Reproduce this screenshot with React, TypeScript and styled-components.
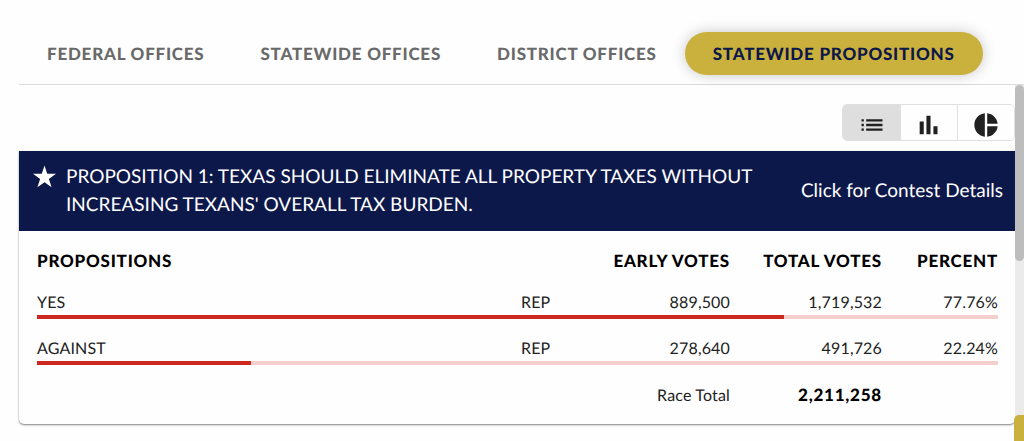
import React, { useState } from "react";
import styled, { createGlobalStyle } from "styled-components";

const GlobalStyle = createGlobalStyle`
  *, *::before, *::after { box-sizing: border-box; }
  html, body, #root { height: 100%; }
  body {
    margin: 0;
    background: #fefefe;
    color: #212121;
    font-family: Lato, "Liberation Sans", sans-serif;
    text-rendering: geometricPrecision;
    overflow: hidden;
  }
  button { font: inherit; text-rendering: inherit; cursor: pointer; }
`;

const Page = styled.div`
  display: flex;
  flex-direction: column;
  height: 100%;
  padding-left: 19px;
`;

const TabBar = styled.nav`
  display: flex;
  flex: none;
  padding: 32px 0 9px;
  border-bottom: 1px solid #dcdcdc;
`;

const Tab = styled.button<{ $active: boolean }>`
  height: 43px;
  padding: 0 28px;
  border: 0;
  border-radius: 22px;
  background: ${(p) => (p.$active ? "#cab03d" : "transparent")};
  color: ${(p) => (p.$active ? "#0d184a" : "#6a6a6a")};
  box-shadow: ${(p) => (p.$active ? "0 0 14px rgba(0, 0, 0, 0.22)" : "none")};
  font-size: 17px;
  font-weight: 900;
  line-height: 24px;
  letter-spacing: 0.045em;
  white-space: nowrap;
`;

const ScrollArea = styled.div`
  display: flex;
  flex: 1;
  min-height: 0;
`;

const Content = styled.main`
  flex: 1;
  min-width: 0;
`;

const ScrollTrack = styled.div`
  flex: none;
  width: 9px;
  background: #ebebeb;
`;

const ScrollThumb = styled.div`
  height: 176px;
  border-radius: 5px;
  background: #bdbdbd;
`;

const Toolbar = styled.div`
  display: flex;
  justify-content: flex-end;
  padding: 19px 0 10px;
`;

const ToggleGroup = styled.div`
  display: flex;
  border: 1px solid #e0e0e0;
  border-radius: 5px;
  overflow: hidden;
`;

const Toggle = styled.button<{ $active: boolean }>`
  display: flex;
  align-items: center;
  justify-content: center;
  width: 57px;
  height: 35px;
  padding: 4px 0 0;
  border: 0;
  background: ${(p) => (p.$active ? "#dedede" : "#fefefe")};
  color: #212121;

  & + & {
    border-left: 1px solid #e0e0e0;
  }
`;

const Card = styled.section`
  border-radius: 0 0 5px 5px;
  box-shadow: 0 1px 2px rgba(0, 0, 0, 0.5);
  background: #fefefe;
`;

const Banner = styled.header`
  display: flex;
  align-items: center;
  gap: 10px;
  padding: 12px 12px 12px 14px;
  background: #0d184a;
  color: #fff;
  font-size: 19px;
  line-height: 28px;
`;

const Star = styled.svg`
  flex: none;
  align-self: flex-start;
  width: 23px;
  height: 28px;
  fill: currentColor;
`;

const Title = styled.h2`
  flex: 1;
  margin: 0;
  padding-right: 24px;
  font-size: 19px;
  font-weight: 400;
`;

const DetailsButton = styled.button`
  padding: 0;
  border: 0;
  background: none;
  color: inherit;
  white-space: nowrap;
`;

const TableWrap = styled.div`
  padding: 18px 17px 16px 18px;
`;

const Table = styled.table`
  width: 100%;
  border-collapse: collapse;
  table-layout: fixed;
  font-size: 16px;
  line-height: 24px;
  letter-spacing: 0.01em;
`;

const Col = styled.col<{ $width?: number }>`
  width: ${(p) => (p.$width ? `${p.$width}px` : "auto")};
`;

const Head = styled.th<{ $end?: boolean }>`
  padding: 0 0 18px;
  color: #000;
  font-size: 17px;
  font-weight: 900;
  letter-spacing: 0.045em;
  text-align: ${(p) => (p.$end ? "right" : "left")};
`;

const Cell = styled.td<{ $end?: boolean }>`
  padding: 0;
  text-align: ${(p) => (p.$end ? "right" : "left")};
`;

const BarCell = styled.td`
  padding: 0 0 18px;
`;

const Bar = styled.div`
  height: 4px;
  background: #f4cfcd;
`;

const BarFill = styled.div`
  height: 4px;
  background: #cd281d;
`;

const Total = styled.strong`
  color: #000;
  font-size: 17px;
  font-weight: 900;
  letter-spacing: 0.045em;
`;

const CornerButton = styled.button`
  position: fixed;
  right: 0;
  bottom: 0;
  width: 10px;
  height: 26px;
  padding: 0;
  border: 0;
  border-radius: 5px 0 0 0;
  background: #cab03d;
`;

const tabs = ["FEDERAL OFFICES", "STATEWIDE OFFICES", "DISTRICT OFFICES", "STATEWIDE PROPOSITIONS"];

const rows = [
  { name: "YES", party: "REP", early: "889,500", total: "1,719,532", percent: 77.76 },
  { name: "AGAINST", party: "REP", early: "278,640", total: "491,726", percent: 22.24 },
];

const views = [
  { name: "List", size: 28, path: "M3 9h14V7H3v2zm0 4h14v-2H3v2zm0 4h14v-2H3v2zm16 0h2v-2h-2v2zm0-10v2h2V7h-2zm0 6h2v-2h-2v2z", flip: true },
  { name: "Bar chart", size: 28, path: "M4 9h3.500v11H4zm5.800-5h3.500v16H9.800zm6 9h3.500v7h-3.500z", flip: false },
  { name: "Pie chart", size: 28, path: "M11 2v20c-5.07-.5-9-4.79-9-10s3.930-9.500 9-10zm2.030 0v8.990H22c-.47-4.740-4.240-8.520-8.970-8.990zm0 11.010V22c4.740-.47 8.500-4.250 8.970-8.990h-8.970z", flip: false },
];

export default function App() {
  const [tab, setTab] = useState(3);
  const [view, setView] = useState(0);
  return (
    <>
      <GlobalStyle />
      <Page>
        <TabBar aria-label="Contests">
          {tabs.map((label, i) => (
            <Tab key={label} $active={i === tab} onClick={() => setTab(i)}>
              {label}
            </Tab>
          ))}
        </TabBar>
        <ScrollArea>
          <Content>
            <Toolbar>
              <ToggleGroup role="group" aria-label="View">
                {views.map((v, i) => (
                  <Toggle key={v.name} aria-label={v.name} aria-pressed={i === view} $active={i === view} onClick={() => setView(i)}>
                    <svg width={v.size} height={v.size} viewBox="0 0 24 24" fill="currentColor" aria-hidden="true">
                      <path d={v.path} transform={v.flip ? "matrix(-1 0 0 1 24 0)" : undefined} />
                    </svg>
                  </Toggle>
                ))}
              </ToggleGroup>
            </Toolbar>
            <Card>
              <Banner>
                <Star viewBox="2 2 20 20" aria-hidden="true">
                  <path d="M12 2l2.360 7.270H22l-6.180 4.490 2.360 7.240L12 16.540 5.820 21l2.360-7.240L2 9.270h7.640z" />
                </Star>
                <Title>
                  PROPOSITION 1: TEXAS SHOULD ELIMINATE ALL PROPERTY TAXES WITHOUT INCREASING TEXANS' OVERALL TAX BURDEN.
                </Title>
                <DetailsButton>Click for Contest Details</DetailsButton>
              </Banner>
              <TableWrap>
                <Table>
                  <colgroup>
                    <Col />
                    <Col $width={71} />
                    <Col $width={138} />
                    <Col $width={152} />
                    <Col $width={116} />
                  </colgroup>
                  <thead>
                    <tr>
                      <Head scope="col" colSpan={2}>PROPOSITIONS</Head>
                      <Head scope="col" $end>EARLY VOTES</Head>
                      <Head scope="col" $end>TOTAL VOTES</Head>
                      <Head scope="col" $end>PERCENT</Head>
                    </tr>
                  </thead>
                  <tbody>
                    {rows.map((r) => (
                      <React.Fragment key={r.name}>
                        <tr>
                          <Cell>{r.name}</Cell>
                          <Cell>{r.party}</Cell>
                          <Cell $end>{r.early}</Cell>
                          <Cell $end>{r.total}</Cell>
                          <Cell $end>{r.percent}%</Cell>
                        </tr>
                        <tr>
                          <BarCell colSpan={5}>
                            <Bar>
                              <BarFill style={{ width: `${r.percent}%` }} />
                            </Bar>
                          </BarCell>
                        </tr>
                      </React.Fragment>
                    ))}
                  </tbody>
                  <tfoot>
                    <tr>
                      <Cell colSpan={3} $end>Race Total</Cell>
                      <Cell $end><Total>2,211,258</Total></Cell>
                      <Cell />
                    </tr>
                  </tfoot>
                </Table>
              </TableWrap>
            </Card>
          </Content>
          <ScrollTrack>
            <ScrollThumb />
          </ScrollTrack>
        </ScrollArea>
      </Page>
      <CornerButton aria-label="Open menu" />
    </>
  );
}
